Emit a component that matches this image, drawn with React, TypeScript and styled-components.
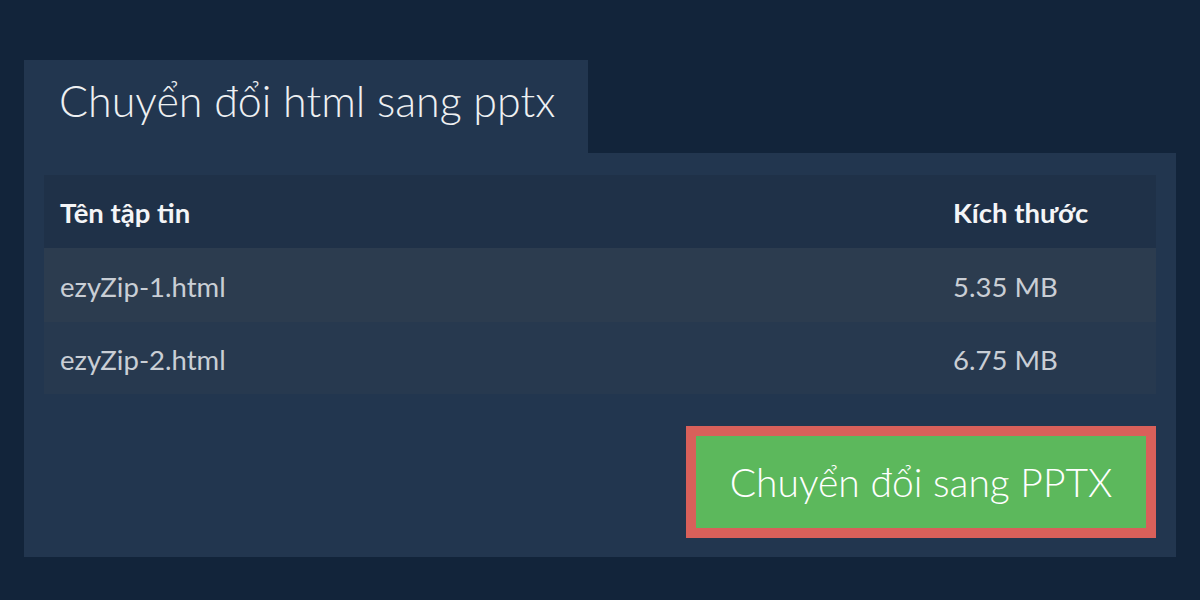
import React from 'react';
import styled, { createGlobalStyle } from 'styled-components';

const GlobalStyle = createGlobalStyle`
  body {
    margin: 0;
    background: #12243a;
    font-family: Lato, 'Noto Sans', sans-serif;
  }
`;

const Page = styled.div`
  padding: 60px 24px 43px;
`;

const Tab = styled.h1`
  display: inline-block;
  margin: 0;
  height: 93px;
  box-sizing: border-box;
  padding: 15px 33px 0 35px;
  background: #22364f;
  color: #eef0f2;
  font-size: 43px;
  font-weight: 300;
  line-height: 52px;
  vertical-align: top;
`;

const Panel = styled.div`
  background: #22364f;
  padding: 22px 20px 19px;
  display: flex;
  flex-direction: column;
`;

const Row = styled.div<{ $bg: string; $h: number }>`
  display: grid;
  grid-template-columns: 1fr 219px;
  align-items: center;
  height: ${(p) => p.$h}px;
  padding-top: 2px;
  box-sizing: border-box;
  background: ${(p) => p.$bg};
`;

const Cell = styled.div<{ $head?: boolean }>`
  padding-left: 16px;
  font-size: ${(p) => (p.$head ? 27.5 : 27.5)}px;
  font-weight: ${(p) => (p.$head ? 700 : 400)};
  color: ${(p) => (p.$head ? '#f4f5f7' : '#c9ced5')};
`;

const Actions = styled.div`
  display: flex;
  justify-content: flex-end;
  margin-top: 32px;
`;

const ConvertButton = styled.button`
  width: 470px;
  height: 112px;
  border: 10px solid #d9605a;
  background: #5cb85c;
  color: #ffffff;
  font-family: Lato, 'Noto Sans', sans-serif;
  font-size: 39px;
  font-weight: 300;
  cursor: pointer;
`;

const files = [
  { name: 'ezyZip-1.html', size: '5.35 MB', bg: '#2c3c4f', h: 74 },
  { name: 'ezyZip-2.html', size: '6.75 MB', bg: '#27394f', h: 72 },
];

function App() {
  return (
    <>
      <GlobalStyle />
      <Page>
        <Tab>Chuyển đổi html sang pptx</Tab>
        <Panel>
          <Row $bg="#1f3148" $h={73}>
            <Cell $head>Tên tập tin</Cell>
            <Cell $head>Kích thước</Cell>
          </Row>
          {files.map(({ name, size, bg, h }) => (
            <Row key={name} $bg={bg} $h={h}>
              <Cell>{name}</Cell>
              <Cell>{size}</Cell>
            </Row>
          ))}
          <Actions>
            <ConvertButton>Chuyển đổi sang PPTX</ConvertButton>
          </Actions>
        </Panel>
      </Page>
    </>
  );
}

export default App;
